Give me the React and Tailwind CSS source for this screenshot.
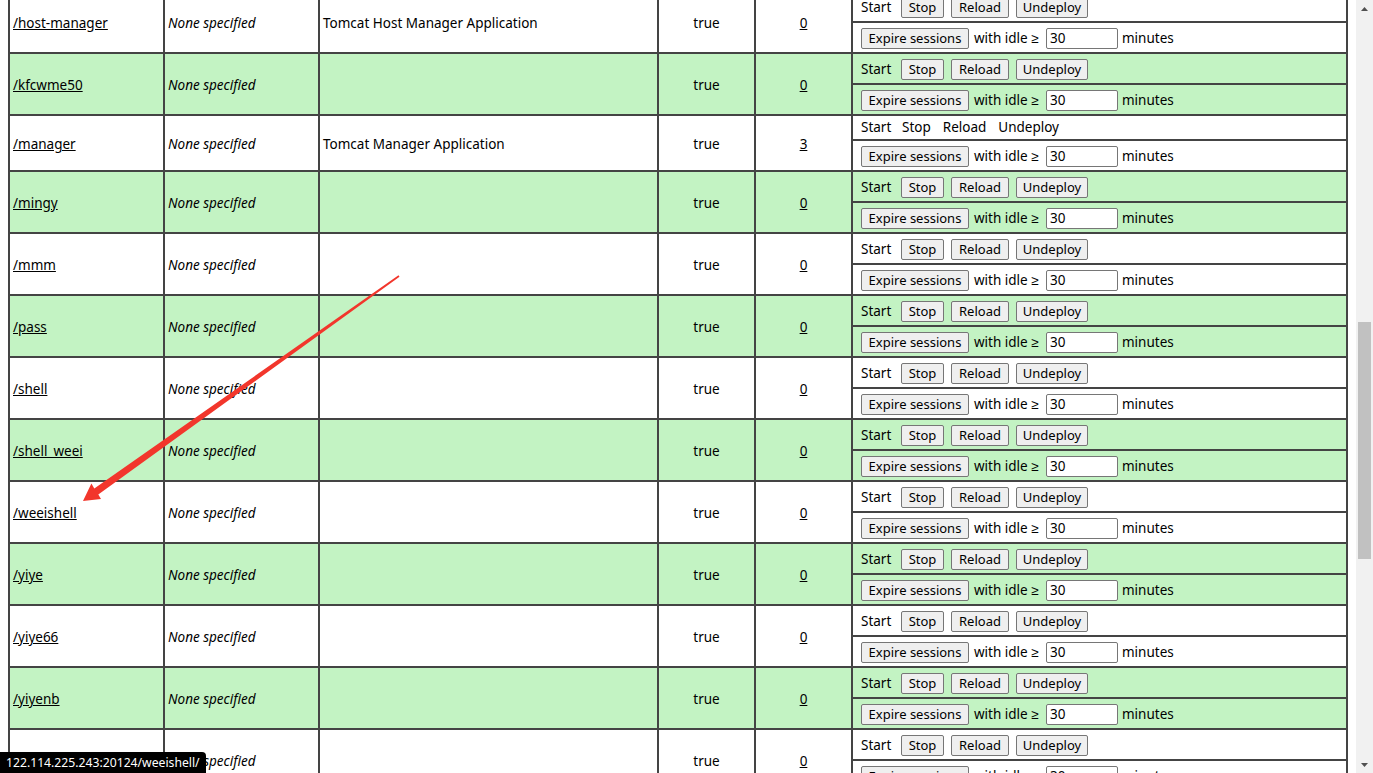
import React from 'react';

const apps = [
    { path: '/host-manager', name: 'Tomcat Host Manager Application', sessions: '0' },
    { path: '/kfcwme50', name: '', sessions: '0' },
    { path: '/manager', name: 'Tomcat Manager Application', sessions: '3', self: true },
    { path: '/mingy', name: '', sessions: '0' },
    { path: '/mmm', name: '', sessions: '0' },
    { path: '/pass', name: '', sessions: '0' },
    { path: '/shell', name: '', sessions: '0' },
    { path: '/shell_weei', name: '', sessions: '0' },
    { path: '/weeishell', name: '', sessions: '0' },
    { path: '/yiye', name: '', sessions: '0' },
    { path: '/yiye66', name: '', sessions: '0' },
    { path: '/yiyenb', name: '', sessions: '0' },
    { path: '/zzz', name: '', sessions: '0' },
];

function Btn({ children, className = '' }) {
    return (
        <button className={`h-[21px] border border-[#767676] bg-[#efefef] rounded-[2px] text-center text-[13px] leading-none text-black ${className}`}>
            {children}
        </button>
    );
}

function AppRow({ app, green }) {
    const bg = green ? 'bg-[#c3f3c3]' : 'bg-white';
    const cell = `border border-[#444] ${bg}`;
    const info = `${cell} px-[3px] pt-[4px] pb-[2px] align-middle`;
    return (
        <>
            <tr>
                <td rowSpan={2} className={info}>
                    <a className="underline text-black">{app.path}</a>
                </td>
                <td rowSpan={2} className={`${info} italic`}>None specified</td>
                <td rowSpan={2} className={info}>{app.name}</td>
                <td rowSpan={2} className={`${info} text-center`}>true</td>
                <td rowSpan={2} className={`${info} text-center`}>
                    <a className="underline text-black">{app.sessions}</a>
                </td>
                <td className={`${cell} pl-[8px] py-[3px]`}>
                    {app.self ? (
                        <div className="flex h-[17px] items-center">
                            <span className="w-[30px]">Start</span>
                            <span className="ml-[11px]">Stop</span>
                            <span className="ml-[12px]">Reload</span>
                            <span className="ml-[12px]">Undeploy</span>
                        </div>
                    ) : (
                        <div className="flex h-[23px] items-center pt-px">
                            <span className="w-[29px]">Start</span>
                            <Btn className="ml-[11px] w-[43px]">Stop</Btn>
                            <Btn className="ml-[7px] w-[58px]">Reload</Btn>
                            <Btn className="ml-[7px] w-[72px]">Undeploy</Btn>
                        </div>
                    )}
                </td>
            </tr>
            <tr>
                <td className={`${cell} pl-[8px] py-[3px]`}>
                    <div className="flex h-[23px] items-center pt-px">
                        <Btn className="w-[108px]">Expire sessions</Btn>
                        <span className="ml-[5px] w-[67px] whitespace-nowrap">with idle ≥</span>
                        <input
                            readOnly
                            value="30"
                            className="ml-[5px] h-[21px] w-[72px] border border-[#767676] rounded-[2px] bg-white px-[3px] text-[13.5px] text-black"
                        />
                        <span className="ml-[4px]">minutes</span>
                    </div>
                </td>
            </tr>
        </>
    );
}

export default function App() {
    return (
        <div className="relative flex h-[773px] w-[1373px] overflow-hidden bg-white font-['Noto_Sans',sans-serif] text-[13.5px] text-black">
            <div className="flex-1 overflow-hidden px-2">
                <table className="-mt-[10px] w-full table-fixed border-separate border-spacing-0 border border-[#444]">
                    <colgroup>
                        <col className="w-[155px]" />
                        <col className="w-[155px]" />
                        <col className="w-[339px]" />
                        <col className="w-[97px]" />
                        <col className="w-[97px]" />
                        <col className="w-[495px]" />
                    </colgroup>
                    <tbody>
                        {apps.map((app, i) => (
                            <AppRow key={app.path} app={app} green={i % 2 === 1} />
                        ))}
                    </tbody>
                </table>
            </div>

            {/* browser scrollbar */}
            <div className="flex w-[17px] flex-col bg-[#f1f1f1]">
                <div className="flex h-[17px] items-center justify-center">
                    <svg width="7" height="4" viewBox="0 0 7 4"><path d="M3.5 0 L7 4 L0 4 Z" fill="#505050" /></svg>
                </div>
                <div className="h-[305px]" />
                <div className="mx-[2px] h-[237px] bg-[#c1c1c1]" />
                <div className="flex-1" />
                <div className="flex h-[17px] items-center justify-center">
                    <svg width="7" height="4" viewBox="0 0 7 4"><path d="M0 0 L7 0 L3.5 4 Z" fill="#505050" /></svg>
                </div>
            </div>

            {/* red annotation arrow */}
            <svg className="pointer-events-none absolute left-0 top-0" width="1373" height="773">
                <polygon
                    points="399.5,276.7 98.3,494.5 101.0,499.0 83,501 91.4,483.5 94.3,488.5 398.5,275.3"
                    fill="#f2362c"
                />
            </svg>

            {/* link status bubble */}
            <div className="absolute bottom-0 left-0 h-[21px] rounded-tr-[4px] bg-black pl-[6px] pr-[6px] text-[12.2px] leading-[21px] text-white">
                122.114.225.243:20124/weeishell/
            </div>
        </div>
    );
}
